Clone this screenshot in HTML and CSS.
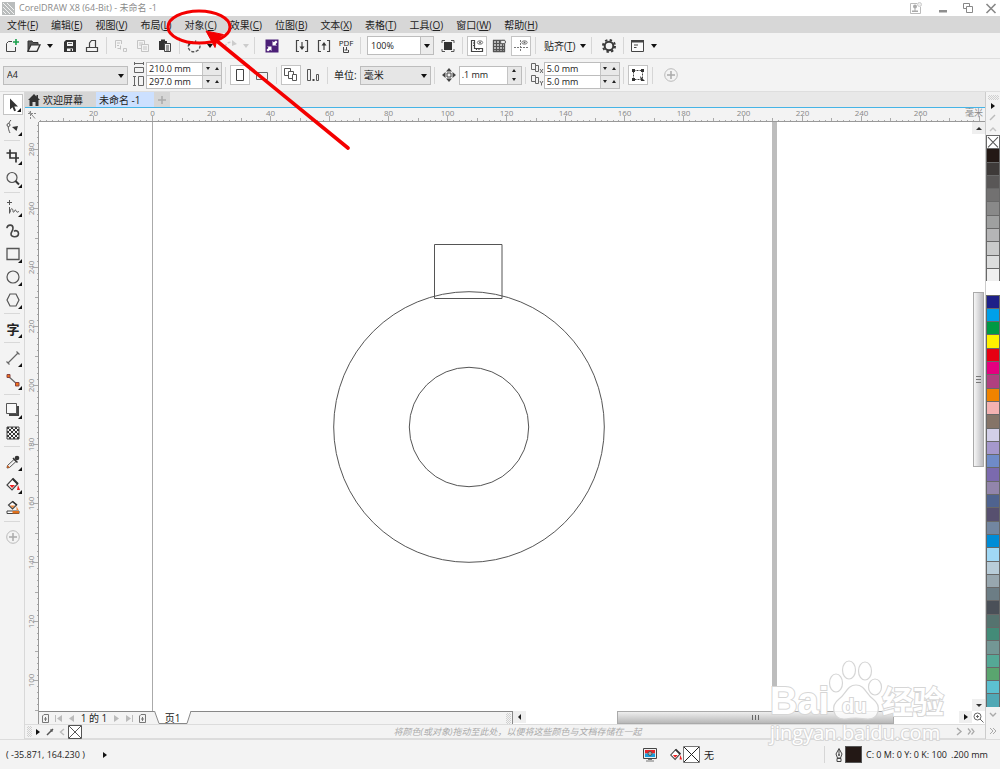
FILE: index.html
```html
<!DOCTYPE html>
<html lang="zh-CN">
<head>
<meta charset="utf-8">
<title>CorelDRAW X8 (64-Bit) - 未命名 -1</title>
<link rel="stylesheet" href="styles.css">
</head>
<body>
<header class="titlebar">
  <svg class="logo" width="13" height="13" viewBox="0 0 13 13"><path fill="#b9bcbc" d="M0 0h13v13H0z"/><path fill="none" stroke="#f2f2f2" d="M1 1l11 11M1 5l7 7M1 9l3 3M5 1l7 7"/></svg>
  <h1 class="title">CorelDRAW X8 (64-Bit) - 未命名 -1</h1>
  <button class="win" aria-label="账户"><svg width="14" height="14" viewBox="0 0 14 14"><path fill="none" stroke="#bbb" d="M8 2.500H1.500v10h10V6"/><circle cx="6" cy="5.500" r="2" fill="#aaa"/><path fill="#aaa" d="M5.500 7h1v2.500H9V11H3V9.500h2.500z"/><circle cx="10.500" cy="3.500" r="2" fill="#eee" stroke="#ccc"/></svg></button>
  <button class="win" aria-label="最小化"><svg width="14" height="14" viewBox="0 0 14 14"><path fill="#8e8e8e" d="M5 9h8v2.500H5z"/></svg></button>
  <button class="win" aria-label="还原"><svg width="14" height="14" viewBox="0 0 14 14"><path fill="#fff" stroke="#888" d="M4.500 2.500h6v5h-6z"/><path fill="#fff" stroke="#888" d="M7.500 5.500h6v6h-6z"/></svg></button>
  <button class="win" aria-label="关闭"><svg width="14" height="14" viewBox="0 0 14 14"><path fill="none" stroke="#888" stroke-width="1.600" d="M2.500 3l9 9M11.500 3l-9 9"/></svg></button>
</header>

<nav class="menubar">
  <button>文件(<u>F</u>)</button><button>编辑(<u>E</u>)</button><button>视图(<u>V</u>)</button><button>布局(<u>L</u>)</button><button>对象(<u>C</u>)</button><button>效果(<u>C</u>)</button><button>位图(<u>B</u>)</button><button>文本(<u>X</u>)</button><button>表格(<u>T</u>)</button><button>工具(<u>O</u>)</button><button>窗口(<u>W</u>)</button><button>帮助(<u>H</u>)</button>
</nav>

<div class="toolbar">
  <button class="tool" aria-label="新建"><svg width="16" height="16" viewBox="0 0 16 16"><path fill="none" stroke="#444" d="M8 3.500H4.500l-2 2v8h9V9"/><path fill="none" stroke="#19a04b" stroke-width="1.600" d="M12 1v6M9 4h6"/></svg></button>
  <button class="tool" aria-label="打开"><svg width="16" height="16" viewBox="0 0 16 16"><path fill="#555" stroke="#333" d="M2 13V3h4l1 1.500h5V7"/><path fill="#f3f3f3" stroke="#333" stroke-width="1.300" d="M2 13.300l3-6.500h9l-3 6.500z"/></svg></button>
  <button class="caret" aria-label="最近打开"></button>
  <button class="tool lead" aria-label="保存"><svg width="16" height="16" viewBox="0 0 16 16"><path fill="#333" d="M4 2h10v12H2V4z"/><path fill="#f3f3f3" d="M5 4h6v4H5zM5 10.500h6V13H5z"/><path fill="#333" d="M6 5h4v.8H6zM8.500 11h1.500v2H8.500z"/></svg></button>
  <button class="tool" aria-label="打印"><svg width="16" height="16" viewBox="0 0 16 16"><path fill="none" stroke="#444" stroke-width="1.200" d="M2.500 9.500h11v4h-11zM5.500 9V5l2-2.500h4V9"/></svg></button>
  <i class="sep"></i>
  <button class="tool" aria-label="剪切" disabled><svg width="16" height="16" viewBox="0 0 16 16"><path fill="none" stroke="#c4c4c4" d="M2.500 10V2.500h6V6M4 5h3M4 7.500h2M7.500 7.500v4M11.500 13.500h2v-3h-3v3zM4.500 10.500h3"/></svg></button>
  <button class="tool" aria-label="复制" disabled><svg width="16" height="16" viewBox="0 0 16 16"><path fill="#f3f3f3" stroke="#c4c4c4" d="M2.500 2.500h7v8h-7zM4 5h4M4 7h4"/><path fill="#f3f3f3" stroke="#c4c4c4" d="M6.500 6.500h7v7h-7zM8 9h4M8 11h4"/></svg></button>
  <button class="tool" aria-label="粘贴"><svg width="16" height="16" viewBox="0 0 16 16"><path fill="#333" d="M2 3h2V1.500h4V3h2v9H2z"/><path fill="#f3f3f3" stroke="#444" d="M7.500 5.500h6v8h-6zM9 8h3M9 10h3M9 12h3"/></svg></button>
  <i class="sep"></i>
  <button class="tool" aria-label="撤销"><svg width="16" height="16" viewBox="0 0 16 16"><path fill="none" stroke="#555" stroke-width="1.400" stroke-dasharray="3 1.500" d="M3 5.500C0 12 7 16 11.500 12.500S14 4 9 3"/><path fill="#333" d="M2 3h5L3 8z"/></svg></button>
  <button class="caret" aria-label="撤销列表"></button>
  <button class="tool lead" aria-label="重做" disabled><svg width="16" height="16" viewBox="0 0 16 16"><path fill="none" stroke="#ccc" stroke-width="1.400" stroke-dasharray="3 1.500" d="M5 13C1 8 5 3 11 4.500"/><path fill="#ccc" d="M10 2l5 4-5 2z"/></svg></button>
  <button class="caret off" aria-label="重做列表" disabled></button>
  <i class="sep"></i>
  <button class="tool room" aria-label="搜索内容"><svg width="16" height="16" viewBox="0 0 16 16"><path fill="#4b1f77" d="M1.500 1.500h13v13h-13z"/><path fill="#fff" d="M8.500 7.500V3l1.300 1.300L12 2.500l1.500 1.500-2 2.200 1.500 1.300zM7.500 8.500V13l-1.300-1.300L4 13.500 2.500 12l2-2.200L3 8.500z"/></svg></button>
  <button class="tool wide" aria-label="导入"><svg width="16" height="16" viewBox="0 0 16 16"><path fill="none" stroke="#444" stroke-width="1.200" d="M5 2.500H2.500v11H5M11 2.500h2.500v11H11M8 4v6"/><path fill="#333" d="M5.500 8.500h5L8 12z"/></svg></button>
  <button class="tool" aria-label="导出"><svg width="16" height="16" viewBox="0 0 16 16"><path fill="none" stroke="#444" stroke-width="1.200" d="M5 2.500H2.500v11H5M11 2.500h2.500v11H11M8 6v6"/><path fill="#333" d="M5.500 7.500h5L8 4z"/></svg></button>
  <button class="tool pdf" aria-label="发布为 PDF"><span>PDF</span><svg width="8" height="6" viewBox="0 0 8 6"><path fill="none" stroke="#444" d="M1.500 0v5.500h5V3M4.500 0v3M2.500 3h3"/></svg></button>
  <i class="sep"></i>
  <label class="combo zoom room"><select aria-label="缩放级别"><option>100%</option></select></label>
  <button class="tool room" aria-label="全屏预览"><svg width="16" height="16" viewBox="0 0 16 16"><path fill="#333" d="M4 4h8v8H4z"/><path fill="none" stroke="#555" d="M2 5V2.500h3M11 2.500h3V5M14 11v2.500h-3M5 13.500H2V11"/></svg></button>
  <i class="sep"></i>
  <button class="tool on" aria-label="显示标尺"><svg width="16" height="16" viewBox="0 0 16 16"><path fill="none" stroke="#444" stroke-width="1.200" d="M2.500 2.500h3v8h8v3h-11zM5 5H4M5 7.500H4M7.500 11v1M10 11v1"/><ellipse cx="11" cy="4.500" rx="2.700" ry="1.700" fill="none" stroke="#777"/><circle cx="11" cy="4.500" r="1" fill="#666"/></svg></button>
  <button class="tool" aria-label="显示网格"><svg width="16" height="16" viewBox="0 0 16 16"><path fill="none" stroke="#555" stroke-width="1.300" d="M2.500 2v12M5.500 2v12M8.500 2v12M11.500 2v12M13.500 2v12M2 2.500h12M2 5.500h12M2 8.500h12M2 11.500h12M2 13.500h12"/><ellipse cx="12" cy="4" rx="2.700" ry="1.700" fill="#eee" stroke="#666"/></svg></button>
  <button class="tool on" aria-label="显示辅助线"><svg width="16" height="16" viewBox="0 0 16 16"><path fill="none" stroke="#777" stroke-dasharray="2 1" d="M7.500 2v12M1 9.500h14"/><ellipse cx="11.500" cy="4.500" rx="2.700" ry="1.700" fill="none" stroke="#777"/><circle cx="11.500" cy="4.500" r="1" fill="#666"/></svg></button>
  <i class="sep"></i>
  <button class="snap">贴齐(<u>T</u>)</button>
  <button class="caret" aria-label="贴齐选项"></button>
  <i class="sep"></i>
  <button class="tool room" aria-label="选项"><svg width="16" height="16" viewBox="0 0 16 16"><circle cx="8" cy="8" r="4.300" fill="none" stroke="#3a3a3a" stroke-width="2"/><circle cx="8" cy="8" r="6" fill="none" stroke="#3a3a3a" stroke-width="2" stroke-dasharray="2.350 2.360"/></svg></button>
  <i class="sep"></i>
  <button class="tool" aria-label="应用程序启动器"><svg width="16" height="16" viewBox="0 0 16 16"><path fill="#fafafa" stroke="#444" d="M1.500 2.500h12v11h-12z"/><path fill="#444" d="M1 2h13v2.500H1zM4 6.500h4v1H4zM4 9h2.500v1H4z"/></svg></button>
  <button class="caret" aria-label="启动器列表"></button>
</div>

<div class="toolbar props">
  <label class="combo paper"><select aria-label="页面尺寸"><option>A4</option></select></label>
  <div class="pair">
    <svg width="13" height="25" viewBox="0 0 13 25"><path fill="none" stroke="#666" d="M1 1.500h10M1.500 0v3M10.500 0v3M1.500 5.500h9v5h-9zM1.500 14v10M0 14.500h3M0 23.500h3M5.500 14.500h5v9h-5z"/></svg>
    <div class="fields">
      <span class="spin"><input aria-label="宽度" value="210.0 mm"><button class="dn" aria-label="减小宽度"></button><button class="up" aria-label="增大宽度"></button></span>
      <span class="spin"><input aria-label="高度" value="297.0 mm"><button class="dn" aria-label="减小高度"></button><button class="up" aria-label="增大高度"></button></span>
    </div>
  </div>
  <i class="sep"></i>
  <button class="tool on" aria-label="纵向"><svg width="16" height="16" viewBox="0 0 16 16"><path fill="#fff" stroke="#444" d="M4.500 2.500h7v11h-7z"/></svg></button>
  <button class="tool" aria-label="横向"><svg width="16" height="16" viewBox="0 0 16 16"><path fill="none" stroke="#666" d="M2.500 5.500h11v7h-11z"/></svg></button>
  <i class="sep"></i>
  <button class="tool on" aria-label="所有页面"><svg width="16" height="16" viewBox="0 0 16 16"><path fill="#fff" stroke="#555" d="M1.500 1.500h6v7h-6z"/><path fill="#fff" stroke="#555" d="M5.500 4.500h5v7h-5z"/><path fill="#fff" stroke="#555" d="M9.500 7.500h4v6h-4z"/></svg></button>
  <button class="tool" aria-label="当前页面"><svg width="16" height="16" viewBox="0 0 16 16"><path fill="none" stroke="#555" d="M2.500 2.500h3v11h-3zM11.500 7.500h2v6h-2z"/><path fill="#444" d="M7.500 12h2v2h-2z"/></svg></button>
  <i class="sep"></i>
  <label class="unit" for="unit">单位:</label>
  <span class="combo units"><select id="unit"><option>毫米</option></select></span>
  <i class="sep"></i>
  <svg class="nudge" width="14" height="14" viewBox="0 0 14 14"><path fill="#444" d="M7 0l3 3.500H4zM7 14l3-3.500H4zM0 7l3.500-3v6zM14 7l-3.500-3v6z"/><path fill="#f3f3f3" stroke="#444" d="M5 5h4v4H5z"/></svg>
  <span class="spin tall"><input aria-label="微调距离" value=".1 mm"><span class="stack"><button class="up" aria-label="增大微调"></button><button class="dn" aria-label="减小微调"></button></span></span>
  <i class="sep"></i>
  <div class="pair dup">
    <svg width="13" height="25" viewBox="0 0 13 25"><g fill="#f3f3f3" stroke="#666"><path d="M.5 1.500h4v6h-4z"/><path d="M4.500 3.500h3v6h-3z"/><path d="M.5 13.500h4v6h-4z"/><path d="M4.500 15.500h3v6h-3z"/><path fill="none" d="M9 7l3 4M12 7l-3 4M9 19l1.500 2.500L12 19M10.500 21v2.500"/></g></svg>
    <div class="fields">
      <span class="spin"><input aria-label="再制水平距离" value="5.0 mm"><button class="dn" aria-label="减小水平距离"></button><button class="up" aria-label="增大水平距离"></button></span>
      <span class="spin"><input aria-label="再制垂直距离" value="5.0 mm"><button class="dn" aria-label="减小垂直距离"></button><button class="up" aria-label="增大垂直距离"></button></span>
    </div>
  </div>
  <i class="sep"></i>
  <button class="tool on" aria-label="视为已填充"><svg width="16" height="16" viewBox="0 0 16 16"><path fill="none" stroke="#444" stroke-dasharray="2 1" d="M3.500 3.500h9v9h-9z"/><path fill="#333" d="M2 2h3v3H2zM11 2h3v3h-3zM2 11h3v3H2zM10 9l5 5h-4z"/></svg></button>
  <i class="sep"></i>
  <button class="tool plus" aria-label="快速自定义"><svg width="16" height="16" viewBox="0 0 16 16"><circle cx="8" cy="8" r="6.300" fill="none" stroke="#bbb"/><path stroke="#aaa" stroke-width="1.500" d="M8 4v8M4 8h8"/></svg></button>
</div>

<main class="work">
  <aside class="toolbox">
    <button class="on fly" aria-label="选择"><svg width="16" height="16" viewBox="0 0 16 16"><path fill="#333" d="M5 1.500v11l2.500-2.300 1.700 4 1.800-.8-1.700-3.800H13z"/></svg></button>
    <button class="fly" aria-label="形状"><svg width="16" height="16" viewBox="0 0 16 16"><path fill="none" stroke="#555" d="M6 1C2 5 3 10 5 14"/><circle cx="3.500" cy="6" r="1.500" fill="#f3f3f3" stroke="#555"/><path fill="#333" d="M7 8l6-1-1.500 5z"/></svg></button>
    <hr>
    <button class="fly" aria-label="裁剪"><svg width="16" height="16" viewBox="0 0 16 16"><path fill="none" stroke="#333" stroke-width="1.700" d="M5 1.500V10h9M1.500 5H11v9.500"/></svg></button>
    <button class="fly" aria-label="缩放"><svg width="16" height="16" viewBox="0 0 16 16"><circle cx="7" cy="6.500" r="5" fill="none" stroke="#555" stroke-width="1.200"/><path stroke="#333" stroke-width="2" d="M10.500 10l3.500 3.500"/></svg></button>
    <hr>
    <button class="fly" aria-label="手绘"><svg width="16" height="16" viewBox="0 0 16 16"><path fill="none" stroke="#555" d="M4.500 0v5M2 2.500h5M4.500 7v6.500M5 12.500c1-6 3-4 3-1 0 1 1 1 1.500-.5s1.500-1 2 .5 1.500 0 2.500 0"/></svg></button>
    <button aria-label="艺术笔"><svg width="16" height="16" viewBox="0 0 16 16"><path fill="none" stroke="#444" stroke-width="1.600" stroke-linecap="round" d="M2 4.500C3 1 8 1.500 8 5c0 3-2 4-2 6 0 4 7.500 3.500 7.500-.5C13.500 8 11 7 9.500 8"/></svg></button>
    <button class="fly" aria-label="矩形"><svg width="16" height="16" viewBox="0 0 16 16"><path fill="none" stroke="#555" stroke-width="1.300" d="M2 2.500h12v11H2z"/></svg></button>
    <button class="fly" aria-label="椭圆形"><svg width="16" height="16" viewBox="0 0 16 16"><circle cx="8" cy="8" r="6" fill="none" stroke="#555" stroke-width="1.200"/></svg></button>
    <button class="fly" aria-label="多边形"><svg width="16" height="16" viewBox="0 0 16 16"><path fill="none" stroke="#555" stroke-width="1.200" d="M5 2h6l3 6-3 6H5L2 8z"/></svg></button>
    <hr>
    <button class="fly glyph" aria-label="文本">字</button>
    <hr>
    <button class="fly" aria-label="平行度量"><svg width="16" height="16" viewBox="0 0 16 16"><path fill="none" stroke="#666" stroke-width="1.200" d="M3 13L13 3M1.500 11.500l3 3M11.500 1.500l3 3"/></svg></button>
    <button class="fly" aria-label="直线连接器"><svg width="16" height="16" viewBox="0 0 16 16"><path stroke="#666" stroke-width="1.200" d="M3 3l10 9"/><path fill="#f07018" stroke="#844" d="M2 1.500h3v3H2zM10.500 9.500h3.500v3.500h-3.500z"/></svg></button>
    <hr>
    <button class="fly" aria-label="阴影"><svg width="16" height="16" viewBox="0 0 16 16"><path fill="#444" d="M4 4h10v10H4z"/><path fill="#f8f8f8" stroke="#555" d="M1.500 1.500h10v10h-10z"/></svg></button>
    <button aria-label="透明度"><svg width="16" height="16" viewBox="0 0 16 16"><defs><pattern id="chk" width="4" height="4" x="2" y="2" patternUnits="userSpaceOnUse"><path fill="#333" d="M0 0h2v2H0zM2 2h2v2H2z"/></pattern></defs><path fill="url(#chk)" stroke="#444" d="M2 2h12v12H2z"/></svg></button>
    <hr>
    <button class="fly" aria-label="颜色滴管"><svg width="16" height="16" viewBox="0 0 16 16"><path fill="#f3f3f3" stroke="#555" d="M9 5.500l2 2-6.500 6-2.500.5.500-2.500z"/><path fill="#c65a1a" d="M2 14l.5-3 2.500 2.500z"/><path stroke="#333" stroke-width="1.500" d="M8 4l4.500 4.500"/><circle cx="12" cy="4" r="2.300" fill="#333"/></svg></button>
    <button class="fly" aria-label="交互式填充"><svg width="16" height="16" viewBox="0 0 16 16"><path fill="#fff" stroke="#444" stroke-width="1.200" d="M7.500 2l5 5-5.500 6-5-5z"/><path stroke="#333" stroke-width="2" d="M7.500 1.500l5.500 5.500"/><path fill="#e22" d="M4.500 8h5.500l-3 3zM13 8l2 5h-3z"/></svg></button>
    <button aria-label="智能填充"><svg width="16" height="16" viewBox="0 0 16 16"><path fill="#fff" stroke="#444" stroke-width="1.200" d="M7.500 1.500l4 3.500-4 4-4-4z"/><path stroke="#333" stroke-width="1.500" d="M7.500 1.500L12 5"/><path fill="#ef8a3c" d="M5 5.500h5L7.500 8zM11.500 6l2 4h-2z"/><path fill="#fff" stroke="#444" d="M2 11h12v2.500H2z"/><path fill="#e0701c" d="M7.500 11H14v2.500H7.500z"/></svg></button>
    <hr>
    <button aria-label="快速自定义工具箱"><svg width="16" height="16" viewBox="0 0 16 16"><circle cx="8" cy="8" r="6.300" fill="none" stroke="#bbb"/><path stroke="#aaa" stroke-width="1.500" d="M8 4v8M4 8h8"/></svg></button>
  </aside>

  <section class="document">
    <div class="tabs">
      <button class="tab"><svg width="12" height="12" viewBox="0 0 12 12"><path fill="#333" d="M6 0L0 6h1.500v6h3V8h3v4h3V6H12l-2-2V1H8.500v1.500z"/></svg>欢迎屏幕</button>
      <button class="tab active">未命名 -1</button>
      <button class="tab add" aria-label="新建标签"><svg width="10" height="10" viewBox="0 0 10 10"><path stroke="#aaa" stroke-width="1.500" d="M5 1v8M1 5h8"/></svg></button>
    </div>
    <div class="view">
      <div class="corner"><svg width="13" height="13" viewBox="0 0 13 13"><path fill="none" stroke="#888" stroke-dasharray="2 1" d="M5.500 3v8M3 5.500h8"/><path fill="none" stroke="#888" d="M4 3.500l6 7"/></svg></div>
      <div class="ruler-x"><svg id="rx" width="100%" height="13"></svg><span>毫米</span></div>
      <div class="ruler-y"><svg id="ry" width="13" height="100%"></svg></div>
      <div class="canvas">
        <svg width="100%" height="100%">
          <g transform="translate(-39 -122)" fill="none" stroke="#555">
            <path stroke="#aaa" d="M152.500 122V2000"/>
            <path fill="#bdbdbd" stroke="none" d="M772 122h5v2000h-5z"/>
            <path d="M434.500 244.500h67.500v54h-67.500z"/>
            <circle cx="469" cy="427" r="135.300"/>
            <circle cx="469" cy="427" r="59.700"/>
          </g>
        </svg>
      </div>
      <div class="scroll-y">
        <button class="arrow" aria-label="向上滚动"><i class="tri u"></i></button>
        <div class="track"><div class="thumb"><svg width="5" height="7" viewBox="0 0 5 7"><path stroke="#777" d="M0 .5h5M0 3.500h5M0 6.500h5"/></svg></div></div>
        <button class="arrow" aria-label="向下滚动"><i class="tri d"></i></button>
      </div>
      <div class="ruler-end"></div>
      <div class="bottom">
        <div class="pages">
          <button aria-label="在前添加页"><svg width="9" height="9" viewBox="0 0 9 9"><path fill="none" stroke="#777" d="M3 .5h4.500v8h-6V2zM4.500 3v4M3 5h3"/></svg></button>
          <button aria-label="首页"><svg width="9" height="9" viewBox="0 0 9 9"><path stroke="#bbb" d="M1.500 1v7"/><path fill="#bbb" d="M8 1v7L3 4.500z"/></svg></button>
          <button aria-label="上一页"><svg width="9" height="9" viewBox="0 0 9 9"><path fill="#bbb" d="M7 1v7L2 4.500z"/></svg></button>
          <span class="count">1 的 1</span>
          <button aria-label="下一页"><svg width="9" height="9" viewBox="0 0 9 9"><path fill="#bbb" d="M2 1v7l5-3.500z"/></svg></button>
          <button aria-label="末页"><svg width="9" height="9" viewBox="0 0 9 9"><path stroke="#bbb" d="M7.500 1v7"/><path fill="#bbb" d="M1 1v7l5-3.500z"/></svg></button>
          <button aria-label="在后添加页"><svg width="9" height="9" viewBox="0 0 9 9"><path fill="none" stroke="#777" d="M3 .5h4.500v8h-6V2zM4.500 3v4M3 5h3"/></svg></button>
          <button class="page-tab"><svg width="37" height="13" viewBox="0 0 37 13"><path fill="#fff" d="M0 0h37l-4 12.500H5z"/><path fill="none" stroke="#888" d="M.5 0L5 12.500h28L37 0"/></svg><span>页1</span></button>
          <i class="grip"></i>
        </div>
        <div class="scroll-x">
          <button class="arrow" aria-label="向左滚动"><i class="tri l"></i></button>
          <div class="track"><div class="thumb"><svg width="7" height="5" viewBox="0 0 7 5"><path stroke="#666" d="M.5 0v5M3.500 0v5M6.500 0v5"/></svg></div></div>
          <button class="arrow" aria-label="向右滚动"><i class="tri r"></i></button>
          <button class="nav" aria-label="导航器"><svg width="11" height="11" viewBox="0 0 11 11"><circle cx="4.500" cy="4.500" r="3.500" fill="none" stroke="#666"/><path stroke="#666" d="M7 7l3.500 3.500M3 4.500h3M4.500 3v3"/></svg></button>
        </div>
      </div>
    </div>
    <div class="doc-palette">
      <i class="grip"></i>
      <button aria-label="调色板选项"><i class="tri r"></i></button>
      <button aria-label="滴管"><svg width="8" height="8" viewBox="0 0 8 8"><path stroke="#555" stroke-width="1.500" d="M1 7l4-4M4.500 1.500l2 2M6 2l1-1"/></svg></button>
      <button aria-label="向左"><svg width="6" height="8" viewBox="0 0 6 8"><path fill="none" stroke="#bbb" stroke-width="1.400" d="M5 1L1.500 4 5 7"/></svg></button>
      <button class="none" aria-label="无颜色"><svg width="14" height="14" viewBox="0 0 14 14"><path fill="#fff" stroke="#555" d="M.5.500h13v13H.500zM1 1l12 12M13 1L1 13"/></svg></button>
      <em>将颜色(或对象)拖动至此处，以便将这些颜色与文档存储在一起</em>
      <button aria-label="向右"><svg width="8" height="9" viewBox="0 0 8 9"><path fill="none" stroke="#aaa" stroke-width="1.400" d="M2 1l4 3.500L2 8"/></svg></button>
      <button aria-label="展开调色板"><svg width="8" height="9" viewBox="0 0 8 9"><path fill="none" stroke="#aaa" stroke-width="1.200" d="M1 1.500l2.500 3L1 7.500M4.500 1.500l2.500 3-2.500 3"/></svg></button>
    </div>
  </section>

  <aside class="palette">
    <i class="grip h"></i>
    <button aria-label="调色板菜单"><i class="tri r"></i></button>
    <button aria-label="颜色滴管"><svg width="8" height="8" viewBox="0 0 8 8"><path stroke="#bbb" stroke-width="1.400" d="M1 7l5-5"/></svg></button>
    <button aria-label="向上"><svg width="8" height="6" viewBox="0 0 8 6"><path fill="none" stroke="#c4c4c4" stroke-width="1.400" d="M1 5l3-3 3 3"/></svg></button>
    <div class="swatches" id="swatches">
      <button class="swatch no" aria-label="无"><svg width="100%" height="100%" viewBox="0 0 12 12" preserveAspectRatio="none"><path stroke="#555" d="M1 1l10 10M11 1L1 11"/></svg></button>
    </div>
    <button aria-label="向下"><svg width="8" height="6" viewBox="0 0 8 6"><path fill="none" stroke="#aaa" stroke-width="1.400" d="M1 1l3 3 3-3"/></svg></button>
    <button aria-label="展开"><svg width="8" height="8" viewBox="0 0 8 8"><path fill="none" stroke="#aaa" d="M1 1l3 3-3 3M4 1l3 3-3 3"/></svg></button>
  </aside>
</main>

<footer class="status">
  <div class="cell"><span>( -35.871, 164.230 )</span><i class="tri r"></i></div>
  <div class="cell mid">
    <svg width="14" height="14" viewBox="0 0 14 14"><path fill="#eee" stroke="#444" d="M.5.500h13v10H.500z"/><path fill="#e8242a" d="M2 2h10v3.500H2z"/><path fill="#16a0e0" d="M2 5.500h10V9H2z"/><circle cx="7" cy="5.500" r="2" fill="#aaa" stroke="#555"/><path fill="#777" d="M5 11h4v1H5zM3 12.500h8v1H3z"/></svg>
    <svg class="bucket" width="14" height="14" viewBox="0 0 16 16"><path fill="#fff" stroke="#444" stroke-width="1.200" d="M7.500 2l5 5-5.500 6-5-5z"/><path stroke="#333" stroke-width="2" d="M7.500 1.500l5.500 5.500"/><path fill="#e22" d="M4.500 8h5.500l-3 3zM13 8l2 5h-3z"/></svg>
    <svg width="17" height="17" viewBox="0 0 17 17"><path fill="#fff" stroke="#777" d="M.5.500h16v16H.500z"/><path stroke="#222" d="M1 1l15 15M16 1L1 16"/></svg>
    <span>无</span>
  </div>
  <div class="cell end">
    <svg width="10" height="14" viewBox="0 0 10 14"><path fill="#f3f3f3" stroke="#444" d="M5 .5L2 6l1.500 4h3L8 6zM5 1v5.500M3 10.500h4v3H3z"/><circle cx="5" cy="7" r="1" fill="#444"/></svg>
    <i class="ink"></i>
    <span>C: 0 M: 0 Y: 0 K: 100</span><span>.200 mm</span>
  </div>
</footer>

<svg class="mark" width="360" height="160" viewBox="0 0 360 160" aria-hidden="true">
  <ellipse cx="199" cy="27" rx="31" ry="16" fill="none" stroke="#f40000" stroke-width="3"/>
  <path stroke="#f40000" stroke-width="3.600" stroke-linecap="round" d="M348 148L212 37"/>
  <path fill="#f40000" stroke="#f40000" stroke-linejoin="round" d="M206 31l17.500 3.500-6.500 5-2 8z"/>
</svg>

<svg class="watermark" width="180" height="86" viewBox="0 0 180 86" aria-hidden="true">
  <g fill="#fff" fill-opacity=".8" stroke="#d6d6d6" stroke-width="1.200">
    <text class="wm big" x="1" y="53">Bai</text>
    <ellipse cx="67" cy="22" rx="6.500" ry="9"/><ellipse cx="80" cy="9" rx="6.500" ry="9"/><ellipse cx="96" cy="10" rx="6.500" ry="9"/><ellipse cx="106" cy="26" rx="6.500" ry="8"/>
    <path d="M87 24c-9 0-10 9-17 14-9 7-6 20 5 20 6 0 7-1 12-1s7 1 12 1c11 0 14-13 5-20-7-5-8-14-17-14z"/>
    <text class="wm du" x="73" y="52">du</text>
    <text class="wm cn" x="113" y="52">经验</text>
    <text class="wm url" x="1" y="79">jingyan.baidu.com</text>
  </g>
</svg>
<script src="app.js"></script>
</body>
</html>
```
FILE: styles.css
```css
* { box-sizing: border-box; }

body {
  margin: 0;
  height: 100vh;
  display: flex;
  flex-direction: column;
  overflow: hidden;
  position: relative;
  background: #f3f3f3;
  color: #222;
  font: 10px/12px "Open Sans", "Noto Sans CJK SC", sans-serif;
}

button, input, select {
  margin: 0;
  padding: 0;
  border: 0;
  border-radius: 0;
  background: none;
  color: inherit;
  font: inherit;
}

button { display: flex; align-items: center; justify-content: center; flex: none; }
svg { display: block; flex: none; }

.titlebar { display: flex; align-items: center; height: 16px; padding: 0 2px; background: #fff; flex: none; }
.title { flex: 1; margin: 0 0 0 4px; font-size: 9px; font-weight: 400; color: #8a8a8a; }
.win { width: 14px; height: 14px; margin-left: 11px; }

.menubar { display: flex; gap: 13px; height: 17px; padding: 0 7px; background: #d7d7d7; flex: none; }

.toolbar {
  display: flex;
  align-items: center;
  flex: none;
  height: 26px;
  padding-left: 1px;
  border-bottom: 1px solid #dedede;
  white-space: nowrap;
}
.toolbar.props { height: 33px; padding-left: 3px; }
.tool { width: 22px; height: 20px; }
.tool.on { width: 20px; margin: 0 1px; border: 1px solid #c4c4c4; background: #fff; }
.lead { margin-left: 4px; }
.room { margin-left: 3px; }
.wide { margin-left: 8px; }
.sep { flex: none; width: 1px; height: 17px; margin: 0 3px; background: #d6d6d6; }
.caret { width: 10px; height: 20px; }
.caret::before, .combo::after {
  content: "";
  border: 3px solid transparent;
  border-top: 4px solid #111;
  border-bottom: 0;
}
.caret.off::before { border-top-color: #ccc; }
.pdf { flex-direction: column; font-size: 8px; line-height: 8px; }
.snap { padding: 0 3px 0 5px; }

.combo { position: relative; flex: none; height: 19px; border: 1px solid #bdbdbd; background: #e6e6e6; }
.combo select { appearance: none; width: 100%; height: 100%; padding: 0 14px 0 3px; outline: 0; display: block; }
.combo::after { position: absolute; right: 3px; top: 7px; pointer-events: none; }
.zoom { width: 67px; font-size: 9px; background: linear-gradient(90deg, #fff 52px, #bdbdbd 52px, #bdbdbd 53px, #ececec 53px); }
.paper { width: 125px; font-size: 9px; }
.units { width: 71px; margin-left: 3px; }
.unit { padding-left: 3px; }

.pair { display: flex; margin-left: 5px; }
.pair.dup { margin-left: 2px; }
.fields { display: flex; flex-direction: column; width: 76px; border: 1px solid #bdbdbd; }
.spin { display: flex; height: 12px; background: #e8e8e8; font-size: 9px; }
.spin + .spin { border-top: 1px solid #bdbdbd; height: 13px; }
.spin input { flex: 1; min-width: 0; padding-left: 2px; background: #fff; border-right: 1px solid #c4c4c4; }
.up, .dn { width: 9px; }
.up::before, .dn::before { content: ""; border: 2px solid transparent; }
.up::before { border-bottom: 3px solid #222; border-top: 0; }
.dn::before { border-top: 3px solid #222; border-bottom: 0; }
.spin.tall { width: 63px; height: 19px; border: 1px solid #bdbdbd; }
.stack { display: flex; flex-direction: column; width: 13px; }
.stack button { flex: 1; width: 13px; }
.nudge { margin: 0 3px 0 4px; }
.plus { margin-left: 4px; }

.work { flex: 1; min-height: 0; display: flex; }

.toolbox { flex: none; width: 25px; border-right: 1px solid #d8d8d8; }
.toolbox button { position: relative; width: 20px; height: 23px; margin-left: 3px; }
.toolbox .on { border: 1px solid #c4c4c4; background: #fff; height: 21px; margin-top: 2px; }
.toolbox hr { height: 1px; margin: 2px 4px 3px; border: 0; background: #d8d8d8; }
.fly::after {
  content: "";
  position: absolute;
  right: 1px;
  bottom: 2px;
  border-left: 4px solid transparent;
  border-bottom: 4px solid #111;
}
.toolbox .glyph { font-size: 13px; font-weight: 700; }

.document { flex: 1; min-width: 0; display: flex; flex-direction: column; }
.tabs { display: flex; flex: none; height: 16px; background: #e8e8e8; border-bottom: 1px solid #45b4e6; }
.tab { gap: 3px; padding: 0 13px 0 3px; background: #d6d6d6; }
.tab.active { padding: 0 13px 0 3px; background: #cce0ff; }
.tab.add { padding: 0 3px; }

.view {
  flex: 1;
  min-height: 0;
  display: grid;
  grid-template: 14px minmax(0, 1fr) 13px / 14px minmax(0, 1fr) 13px;
}
.ruler-x { position: relative; grid-column: 2 / 4; border-bottom: 1px solid #999; overflow: hidden; color: #888; }
.ruler-x span { position: absolute; right: 2px; top: -1px; font-size: 9px; }
.ruler-y { border-right: 1px solid #999; overflow: hidden; }
.ruler-end { border-right: 1px solid #999; }
.tick-label { font-size: 8px; fill: #888; text-anchor: middle; }
.canvas { background: #fff; overflow: hidden; }
.canvas svg { overflow: hidden; }

.scroll-y { display: flex; flex-direction: column; background: #fff; }
.arrow { width: 13px; height: 12px; background: #efefef; }
.track { position: relative; flex: 1; }
.thumb { position: absolute; display: flex; align-items: center; justify-content: center; border: 1px solid #aaa; }
.scroll-y .thumb { left: 1px; right: 1px; top: 28%; height: 31%; background: linear-gradient(90deg, #f6f6f6, #bcbcc0); }
.scroll-x .thumb { top: 0; bottom: 0; left: 21%; width: 64%; background: linear-gradient(#eee, #b8b8b8); }

.bottom { grid-column: 2 / 4; display: flex; }
.pages { flex: 1; min-width: 0; display: flex; align-items: center; border-top: 1px solid #888; border-right: 1px solid #888; }
.pages button { width: 13px; }
.count { width: 32px; text-align: center; white-space: nowrap; }
.pages .page-tab { position: relative; width: 37px; margin: -1px 0 0 5px; }
.page-tab span { position: absolute; }
.pages .grip { margin-left: auto; margin-right: 1px; }
.scroll-x { flex: 1; min-width: 0; display: flex; background: #fff; }
.nav { width: 13px; }

.tri { width: 0; height: 0; border: 3px solid transparent; }
.tri.u { border-bottom: 3px solid #333; border-top: 0; }
.tri.d { border-top: 3px solid #333; border-bottom: 0; }
.tri.l { border-right: 3px solid #222; border-left: 0; }
.tri.r { border-left: 4px solid #111; border-right: 0; }

.grip {
  flex: none;
  width: 5px;
  height: 11px;
  background: repeating-conic-gradient(#d0d0d0 0 25%, transparent 0 50%) 0 0 / 2px 2px;
}
.grip.h { width: 11px; height: 5px; }

.doc-palette { display: flex; align-items: center; flex: none; height: 15px; padding: 0 8px 0 2px; border: solid #dcdcdc; border-width: 1px 0; }
.doc-palette button { width: 12px; }
.doc-palette .none { width: 14px; height: 14px; }
.doc-palette em { flex: 1; font-size: 9px; text-align: center; color: #aaa; white-space: nowrap; overflow: hidden; }

.palette { flex: none; width: 15px; display: flex; flex-direction: column; align-items: center; padding-top: 3px; border-left: 1px solid #ccc; }
.palette > button { width: 14px; height: 12px; }
.palette > button:nth-last-child(-n+2) { height: 16px; }
.palette > .grip + button { height: 11px; }
.swatches { flex: 1; min-height: 0; width: 14px; display: flex; flex-direction: column; }
.swatch { flex: 1; min-height: 0; width: 14px; border: solid #686868; border-width: 1px 1px 0; }
.swatch.no { background: #fff; }
.swatch.blank { border-color: #fff; }

.status { flex: none; height: 30px; display: grid; grid-template-columns: minmax(0, 643fr) minmax(0, 181fr) minmax(170px, 176fr); border-top: 1px solid #dcdcdc; white-space: nowrap; }
.cell { display: flex; align-items: center; }
.cell:first-child { gap: 18px; padding-left: 6px; font-size: 9px; }
.cell.end { position: relative; gap: 4px; padding-left: 10px; font-size: 9px; }
.cell.end::before { content: ""; position: absolute; left: 0; width: 1px; height: 17px; background: #d6d6d6; }
.bucket { margin-left: 12px; }
.mid span { margin-left: 4px; }
.ink { width: 17px; height: 17px; margin-left: -3px; background: #231815; border: 1px solid #555; }

.mark { position: absolute; left: 0; top: 0; pointer-events: none; }
.watermark { position: absolute; right: 51px; bottom: 22px; pointer-events: none; overflow: visible; }
.wm { font-family: "Liberation Sans", "Noto Sans CJK SC", sans-serif; font-weight: 700; paint-order: stroke; stroke-width: 2px; fill-opacity: 1; }
.big { font-size: 38px; }
.du { font-size: 20px; }
.cn { font-size: 31px; }
.url { font-size: 20px; font-weight: 400; font-family: "Open Sans", sans-serif; }
```
FILE: app.js
```js
const NS = "http://www.w3.org/2000/svg";

function add(parent, tag, attrs, text) {
  const node = document.createElementNS(NS, tag);
  for (const key in attrs) node.setAttribute(key, attrs[key]);
  if (text !== undefined) node.textContent = text;
  parent.appendChild(node);
}

const STEP = 59.05; // pixels per 20 mm

// Horizontal ruler: origin at the page's left edge. Labels stop short of the unit name.
function drawHorizontal() {
  const rx = document.getElementById("rx");
  const width = rx.clientWidth || rx.getBoundingClientRect().width;
  rx.replaceChildren();
  let ticks = "";
  for (let i = -19; ; i++) {
    const x = Math.round(113 + i * STEP / 10) + 0.5;
    if (x > width) break;
    const labelled = i % 10 === 0;
    ticks += `M${x} ${labelled ? 8 : i % 5 === 0 ? 10 : 12}V13`;
    if (labelled && x < width - 30) add(rx, "text", { x: x, y: 8, class: "tick-label" }, Math.abs(i * 2));
  }
  add(rx, "path", { d: ticks, stroke: "#aaa" });
}

// Vertical ruler: labels fall from 280 mm.
function drawVertical() {
  const ry = document.getElementById("ry");
  const height = ry.clientHeight || ry.getBoundingClientRect().height;
  ry.replaceChildren();
  let ticks = "";
  for (let i = -4; ; i++) {
    const y = Math.round(27 + i * STEP / 10) + 0.5;
    if (y > height) break;
    const labelled = i % 10 === 0;
    ticks += `M${labelled ? 8 : i % 5 === 0 ? 10 : 12} ${y}H13`;
    if (labelled && y < height - 10) add(ry, "text", { transform: `translate(9 ${y}) rotate(-90)`, class: "tick-label" }, 280 - i * 2);
  }
  add(ry, "path", { d: ticks, stroke: "#aaa" });
}

function drawRulers() { drawHorizontal(); drawVertical(); }
drawRulers();
window.addEventListener("resize", drawRulers);

const colors = ["#231815", "#3e3a39", "#595757", "#727171", "#898989", "#9fa0a0", "#b5b5b6", "#c9caca", "#dcdddd", "#efefef", "#ffffff",
  "#1d2088", "#00a0e9", "#009944", "#fff100", "#e60012", "#e4007f", "#b04080", "#f08300", "#f4b2b2", "#857468", "#d2cfe8", "#a598cc",
  "#6f8bc8", "#7b6aae", "#9285ab", "#4f638f", "#57506f", "#7286a0", "#008cd6", "#a0d8f5", "#b8ccd8", "#98a7af", "#6c7d85", "#4a5058",
  "#55736f", "#438b78", "#739795", "#55a896", "#5aa56f", "#5cc0d0", "#50a8b5"];
const box = document.getElementById("swatches");
for (const c of colors) {
  const b = document.createElement("button");
  b.className = c === "#ffffff" ? "swatch blank" : "swatch";
  b.style.background = c;
  b.setAttribute("aria-label", c);
  box.appendChild(b);
}
```
